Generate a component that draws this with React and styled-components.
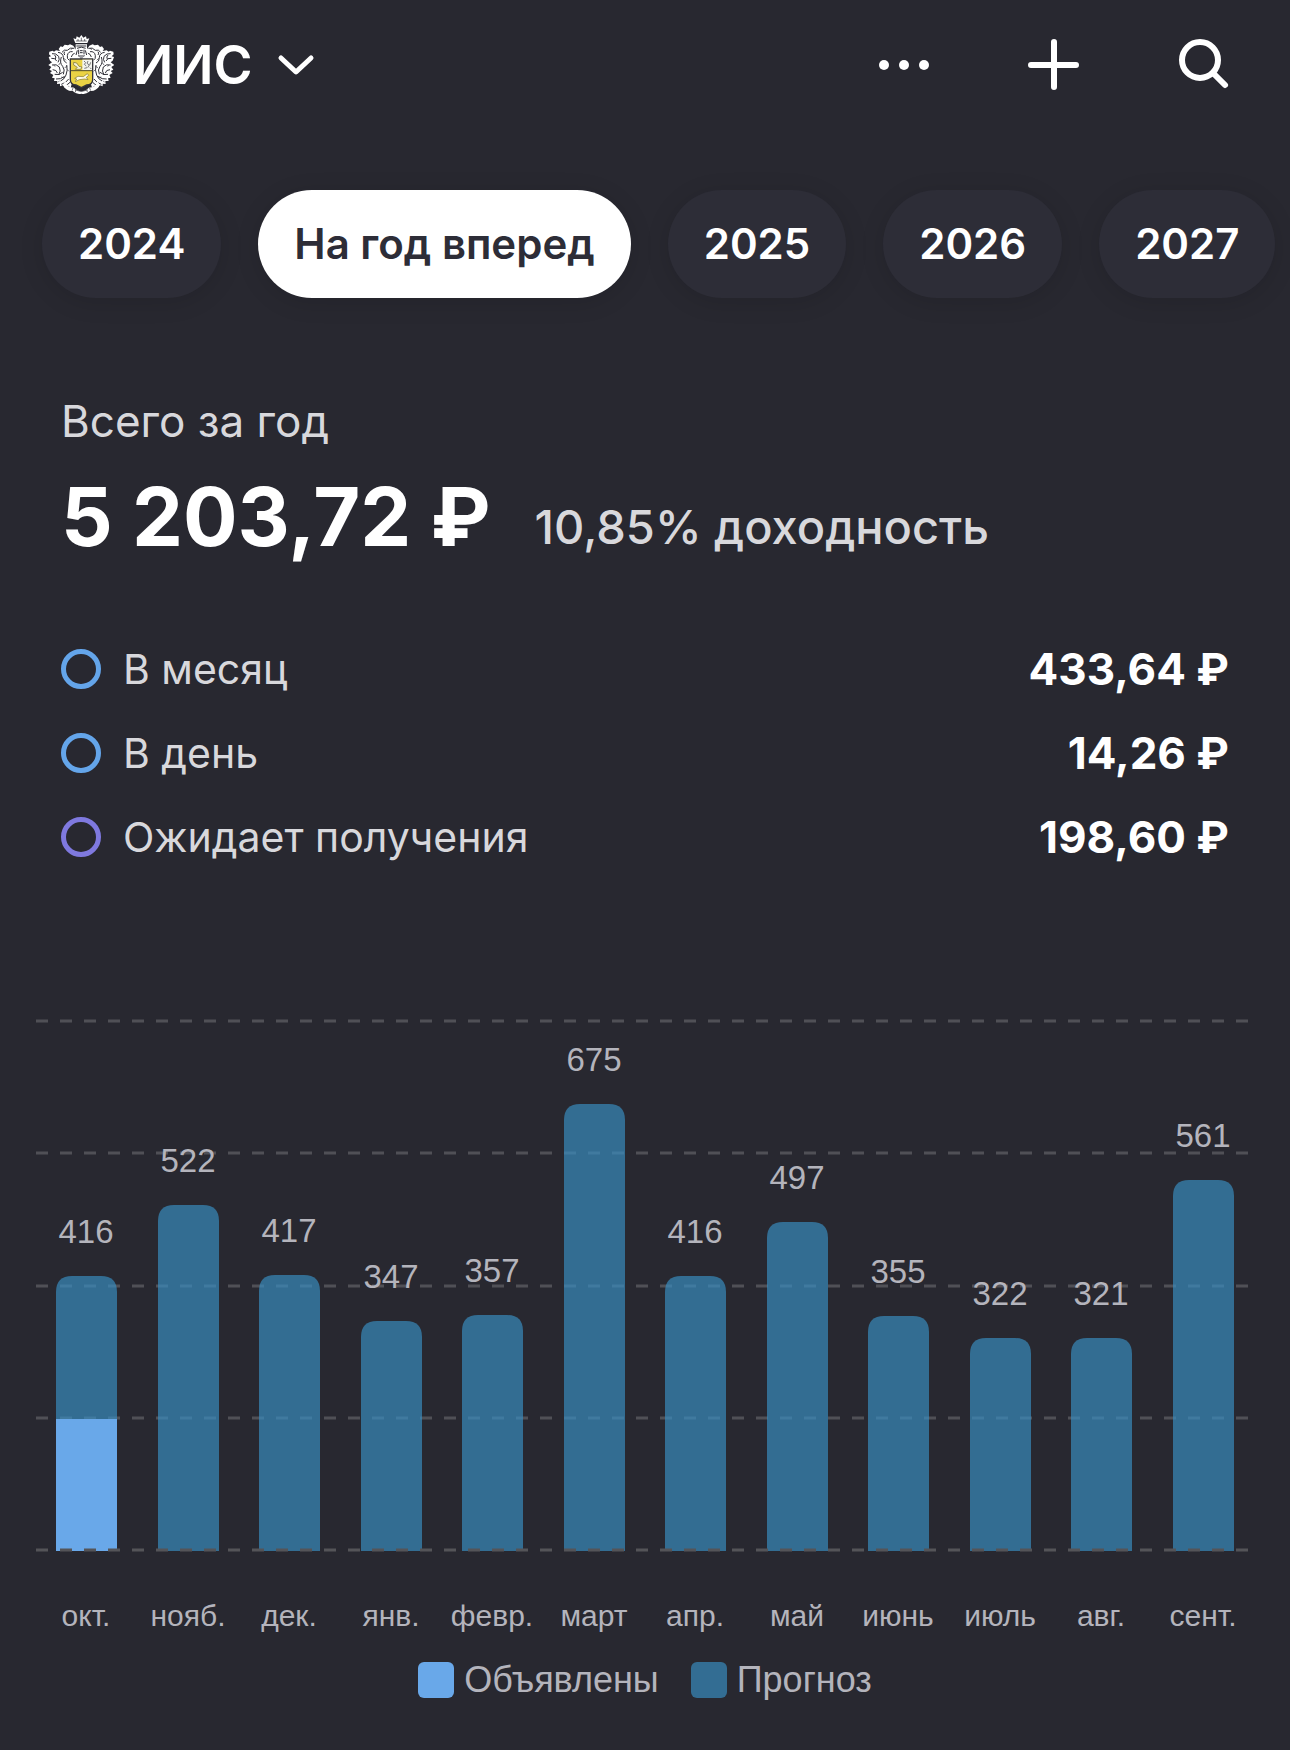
import React, { useState } from "react";
import styled, { createGlobalStyle } from "styled-components";

const periods = ["2024", "На год вперед", "2025", "2026", "2027"];

const rows = [
    { name: "В месяц", value: "433,64 ₽", color: "#64a5ea" },
    { name: "В день", value: "14,26 ₽", color: "#64a5ea" },
    { name: "Ожидает получения", value: "198,60 ₽", color: "#7f79df" },
];

const months = [
    { name: "окт.", total: 416, declared: 199 },
    { name: "нояб.", total: 522 },
    { name: "дек.", total: 417 },
    { name: "янв.", total: 347 },
    { name: "февр.", total: 357 },
    { name: "март", total: 675 },
    { name: "апр.", total: 416 },
    { name: "май", total: 497 },
    { name: "июнь", total: 355 },
    { name: "июль", total: 322 },
    { name: "авг.", total: 321 },
    { name: "сент.", total: 561 },
];

// chart geometry, in viewBox units
const BASE = 551;
const LEFT = 36;
const RIGHT = 1248;
const BAR = 61;
const STEP = 101.5;
const UNIT = 0.662;

const barPath = (x, top) => {
    const r = 16;
    return `M${x} ${BASE}V${top + r}Q${x} ${top} ${x + r} ${top}H${x + BAR - r}Q${x + BAR} ${top} ${x + BAR} ${top + r}V${BASE}Z`;
};

// half of the mantling, the other half is mirrored
const Leaves = () => (
    <g>
        <path
            d="M84 44 L76 32 L66 28 L60 31 L50 29 L44 36 L38 34 L32 42 L36 48 L24 46 L18 50 L14 47 L4 50 L3 58 L9 64 L2 66 L6 77 L12 82 L1 90 L10 96 L4 104 L12 108 L6 114 L16 120 L12 128 L20 130 L18 138 L28 138 L27 147 L36 146 L36 154 L46 150 L50 158 L60 152 L68 158 L72 144 L67 130 L67 76 L84 72 Z"
            fill="#fff"
        />
        <path
            d="M79 40 Q66 36 58 46 Q48 42 42 52 M74 50 Q60 48 58 62 Q56 72 64 76 M82 54 Q72 56 70 66 M30 52 Q46 54 46 68 Q46 80 56 84 M12 56 Q24 54 32 64 Q36 74 30 82 M10 70 Q22 68 26 78 M40 66 Q34 84 44 94 Q52 104 46 118 M12 90 Q26 86 34 96 Q40 108 32 120 M14 104 Q26 104 28 114 M20 118 Q34 122 44 112 M56 90 Q60 106 54 120 Q50 132 38 138 M24 132 Q38 134 50 124 M40 148 Q54 144 62 132 M52 152 Q60 148 66 142 M20 60 Q26 66 22 72 M50 60 Q46 54 50 50"
            fill="none"
            stroke="#303038"
            strokeWidth="3"
        />
        <path
            d="M48 70 l6 6 M38 82 l-6 8 M50 98 l8 -4 M22 94 l-5 -3 M40 126 l9 3 M30 142 l5 -5 M58 104 l5 5 M68 44 l6 -4"
            fill="none"
            stroke="#303038"
            strokeWidth="2"
        />
    </g>
);

const Crest = () => (
    <svg width="66" height="60" viewBox="0 0 198 180" aria-hidden="true">
        <Leaves />
        <g transform="translate(200 0) scale(-1 1)">
            <Leaves />
        </g>
        <path d="M82 24 L76 10 L84 12 L86 4 L94 8 L100 0 L106 8 L114 4 L116 12 L124 10 L118 24 Z" fill="#fff" />
        <path d="M84 18 H116 M90 12 v6 M100 8 v10 M110 12 v6" stroke="#303038" strokeWidth="2" />
        <path d="M83 28 H117 V48 L122 60 L128 74 H72 L78 60 L83 48 Z" fill="#fff" />
        <path d="M85 33 H115 M87 40 Q100 33 113 40 M92 44 V58 M108 44 V58 M96 47 h8 M96 53 h8 M88 46 L84 60 M112 46 L116 60 M90 62 Q100 70 110 62" fill="none" stroke="#303038" strokeWidth="3" />
        <path d="M92 60 H108 L103 72 H97 Z" fill="#9b9ba0" />
        <path d="M52 138 Q58 160 76 157 Q100 181 124 157 Q142 160 148 138 L156 150 Q144 170 126 168 Q114 180 100 176 Q86 180 74 168 Q56 170 44 150 Z" fill="#fff" />
        <path d="M76 157 L72 167 M124 157 L128 167 M84 160 L82 172 M116 160 L118 172 M82 165 Q100 174 118 165" fill="none" stroke="#303038" strokeWidth="2" />
        <path d="M67 72 H134 V134 Q134 148 116 150 L100 158 L84 150 Q67 148 67 134 Z" fill="#ead244" stroke="#34343a" strokeWidth="4" />
        <path d="M103 74 H132 V106 H103 Z" fill="#f4f4ee" />
        <path d="M68 107 H133" stroke="#504b2c" strokeWidth="3" />
        <path d="M108 78 l5 5 l-4 5 l6 5 M120 78 l-3 7 l7 5 l-5 8 M128 82 l-3 8 M109 100 l8 -2 M126 98 l4 4" stroke="#77777a" strokeWidth="3" fill="none" />
        <path d="M77 82 L86 84 L93 94 L102 96 L98 103 H82 L88 97 L77 90 Z" fill="#f7f2d2" stroke="#6f682f" strokeWidth="2" />
        <path d="M80 130 L90 124 L106 125 L118 116 L122 121 L115 127 L120 134 L110 132 L94 134 L82 140 L86 132 Z" fill="#fffbe8" stroke="#7c7430" strokeWidth="2" />
    </svg>
);

const Chart = () => (
    <ChartSvg viewBox="0 0 1290 640" role="img" aria-label="Выплаты по месяцам">
        {[21, 153, 286, 418].map(y => (
            <GridLine key={y} x1={LEFT} x2={RIGHT} y1={y} y2={y} />
        ))}
        {months.map((m, i) => {
            const x = 56 + Math.round(i * STEP);
            const top = Math.round(BASE - m.total * UNIT);
            const split = m.declared ? Math.round(BASE - m.declared * UNIT) : null;
            return (
                <g key={m.name}>
                    <path d={barPath(x, top)} fill="rgba(56, 143, 196, 0.67)" />
                    {split && <rect x={x} y={split} width={BAR} height={BASE - split} fill="#69a8e9" />}
                    <BarValue x={x + 30} y={top - 33}>{m.total}</BarValue>
                    <MonthName x={x + 30} y={626}>{m.name}</MonthName>
                </g>
            );
        })}
        <BaseLine x1={LEFT} x2={RIGHT} y1="550" y2="550" />
    </ChartSvg>
);

const App = () =>
{
    const [period, setPeriod] = useState("На год вперед");

    return (
        <Page>
            <GlobalStyle />
            <Header>
                <Account type="button">
                    <Crest />
                    <AccountName>ИИС</AccountName>
                    <svg width="38" height="22" viewBox="0 0 38 22" fill="none" stroke="#fff" strokeWidth="5" strokeLinecap="round" strokeLinejoin="round">
                        <path d="M4 4 L19 18 L34 4" />
                    </svg>
                </Account>
                <Actions>
                    <IconButton type="button" aria-label="Ещё">
                        <svg width="52" height="52" viewBox="0 0 52 52" fill="#fff">
                            <circle cx="6" cy="26" r="5" />
                            <circle cx="26" cy="26" r="5" />
                            <circle cx="46" cy="26" r="5" />
                        </svg>
                    </IconButton>
                    <IconButton type="button" aria-label="Добавить">
                        <svg width="52" height="52" viewBox="0 0 52 52" stroke="#fff" strokeWidth="6" strokeLinecap="round">
                            <path d="M26 3 V48 M3 26 H48" />
                        </svg>
                    </IconButton>
                    <IconButton type="button" aria-label="Поиск">
                        <svg width="52" height="52" viewBox="0 0 52 52" fill="none" stroke="#fff" strokeWidth="6" strokeLinecap="round">
                            <circle cx="22" cy="21" r="18" />
                            <path d="M35 34 L47 46" />
                        </svg>
                    </IconButton>
                </Actions>
            </Header>
            <Periods>
                {periods.map(p => (
                    <Period key={p} type="button" $active={p === period} aria-pressed={p === period} onClick={() => setPeriod(p)}>{p}</Period>
                ))}
            </Periods>
            <Summary>
                <Caption>Всего за год</Caption>
                <TotalLine>
                    <Total>5 203,72 ₽</Total>
                    <Rate>10,85% доходность</Rate>
                </TotalLine>
                <List>
                    {rows.map(row => (
                        <Row key={row.name}>
                            <Ring $color={row.color} />
                            <RowName>{row.name}</RowName>
                            <RowValue>{row.value}</RowValue>
                        </Row>
                    ))}
                </List>
            </Summary>
            <Chart />
            <Legend>
                <LegendItem><Swatch $color="#69a8e9" />Объявлены</LegendItem>
                <LegendItem><Swatch $color="#336d93" />Прогноз</LegendItem>
            </Legend>
        </Page>
    );
};

const GlobalStyle = createGlobalStyle`
    * {
        box-sizing: border-box;
    }

    body {
        margin: 0;
        background: #282830;
    }

    button {
        margin: 0;
        padding: 0;
        border: none;
        background: none;
        color: inherit;
        font: inherit;
        cursor: pointer;
    }
`;

const Page = styled.main`
    min-height: 100vh;
    overflow: hidden;
    background: #282830;
    color: #fff;
    font-family: Inter, "Liberation Sans", sans-serif;
`;

const Header = styled.header`
    display: flex;
    align-items: center;
    justify-content: space-between;
    height: 130px;
    padding: 0 60px 0 48px;
`;

const Account = styled.button`
    display: flex;
    align-items: center;
`;

const AccountName = styled.span`
    margin: 0 24px 0 19px;
    font-size: 53px;
    line-height: 64px;
    font-weight: 600;
`;

const Actions = styled.div`
    display: flex;
    gap: 98px;
`;

const IconButton = styled.button`
    display: flex;
`;

const Periods = styled.nav`
    display: flex;
    gap: 37px;
    padding: 60px 18px 0 42px;
`;

const Period = styled.button`
    && {
        flex-shrink: 0;
        height: 108px;
        padding: 0 36px 2px;
        border-radius: 54px;
        background: ${props => props.$active ? "#fff" : "#2d2d37"};
        color: ${props => props.$active ? "#2d2d37" : "#fff"};
        font-size: 42px;
        font-weight: 600;
        box-shadow: 0 4px 24px rgba(0, 0, 0, 0.12);
    }
`;

const Summary = styled.section`
    padding: 95px 61px 0;
`;

const Caption = styled.div`
    color: #d8d8dc;
    font-size: 44px;
    line-height: 56px;
`;

const TotalLine = styled.div`
    display: flex;
    align-items: flex-end;
    gap: 44px;
    margin-top: 18px;
`;

const Total = styled.div`
    font-size: 81px;
    line-height: 100px;
    font-weight: 700;
`;

const Rate = styled.div`
    color: #d8d8dc;
    font-size: 47px;
    line-height: 80px;
    font-weight: 500;
`;

const List = styled.ul`
    margin: 60px 0 0;
    padding: 0;
    list-style: none;
`;

const Row = styled.li`
    display: flex;
    align-items: center;
    height: 84px;
`;

const Ring = styled.span`
    width: 40px;
    height: 40px;
    margin-right: 22px;
    border: 5px solid ${props => props.$color};
    border-radius: 50%;
`;

const RowName = styled.span`
    flex: 1;
    color: #d8d8dc;
    font-size: 41px;
`;

const RowValue = styled.span`
    font-size: 44px;
    font-weight: 700;
`;

const ChartSvg = styled.svg`
    display: block;
    width: 100%;
    margin-top: 121px;
    font-family: "Liberation Sans", Arial, sans-serif;
`;

const GridLine = styled.line`
    stroke: #505056;
    stroke-width: 3;
    stroke-dasharray: 12 12;
`;

const BaseLine = styled(GridLine)`
    stroke: #545458;
`;

const BarValue = styled.text`
    fill: #b4b4bc;
    font-size: 33px;
    text-anchor: middle;
`;

const MonthName = styled.text`
    fill: #b4b4bc;
    font-size: 30px;
    text-anchor: middle;
`;

const Legend = styled.div`
    display: flex;
    justify-content: center;
    gap: 32px;
    margin-top: 22px;
    color: #b4b4bc;
    font-family: "Liberation Sans", Arial, sans-serif;
    font-size: 36px;
    line-height: 36px;
`;

const LegendItem = styled.span`
    display: flex;
    align-items: center;
    gap: 10px;
`;

const Swatch = styled.span`
    width: 36px;
    height: 36px;
    border-radius: 6px;
    background: ${props => props.$color};
`;

export default App;
